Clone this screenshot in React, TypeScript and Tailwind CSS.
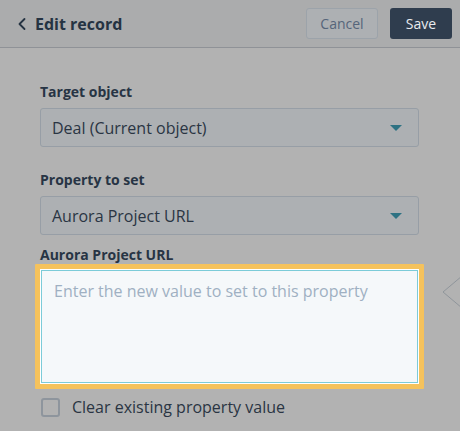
import { ChevronLeft } from "lucide-react";

const font = { fontFamily: "'Open Sans', 'Liberation Sans', sans-serif" };

function Caret() {
  return (
    <svg width="12" height="6" viewBox="0 0 12 6" className="shrink-0">
      <path d="M0 0h12L6 6z" fill="#2e7283" />
    </svg>
  );
}

function SelectField({ label, value }: { label: string; value: string }) {
  return (
    <div className="flex flex-col">
      <label className="text-[14px] font-bold text-[#273444] leading-[18px] mb-[7px]">
        {label}
      </label>
      <div className="h-[39px] flex items-center justify-between pl-[11px] pr-[16px] rounded-[3px] border border-[#979ea6] bg-[#adb0b3]">
        <span className="text-[16px] text-[#2a3543]">{value}</span>
        <Caret />
      </div>
    </div>
  );
}

export default function App() {
  return (
    <div className="w-[460px] h-[431px] bg-[#b2b2b2] overflow-hidden relative" style={font}>
      {/* header */}
      <div className="h-[48px] bg-[#abacad] border-b border-[#8f9297] flex items-center pl-[12px] pr-[8px]">
        <ChevronLeft size={20} strokeWidth={2.2} className="text-[#253342]" />
        <span className="ml-[3px] text-[16px] font-bold text-[#253342]">Edit record</span>
        <div className="ml-auto flex items-center gap-[12px]">
          <button className="w-[72px] h-[31px] rounded-[3px] border border-[#9ca3aa] bg-[#adb0b3] text-[14px] text-[#56657a]">
            Cancel
          </button>
          <button className="w-[62px] h-[31px] rounded-[3px] bg-[#2f3d4e] text-[14px] text-[#e8ebee]">
            Save
          </button>
        </div>
      </div>

      {/* form */}
      <div className="pl-[40px] pr-[41px] pt-[35px] flex flex-col">
        <SelectField label="Target object" value="Deal (Current object)" />
        <div className="h-[24px]" />
        <SelectField label="Property to set" value="Aurora Project URL" />
        <div className="mt-[11px] text-[14px] font-bold text-[#273444] leading-[18px]">
          Aurora Project URL
        </div>
        <div className="-mx-[5px] p-[5px] bg-[#f5c25c] rounded-[1px]">
          <div className="p-[1px] bg-white">
            <div className="h-[113px] border border-[#7ccbd8] bg-[#f5f8fa] px-[12px] pt-[10px] leading-[20px] text-[16px] text-[#9fb0c2]">
              Enter the new value to set to this property
            </div>
          </div>
        </div>
        <div className="mt-[6px] flex items-center">
          <div className="w-[19px] h-[19px] ml-[1px] rounded-[3px] border-2 border-[#8e959d]" />
          <span className="ml-[12px] text-[16px] text-[#2a3543]">Clear existing property value</span>
        </div>
      </div>

      {/* popover pointer */}
      <svg className="absolute left-[442px] top-[275px]" width="20" height="34" viewBox="0 0 20 34">
        <path d="M20 1L1 17l19 16" fill="none" stroke="#8f959b" strokeWidth="1" />
      </svg>
    </div>
  );
}
